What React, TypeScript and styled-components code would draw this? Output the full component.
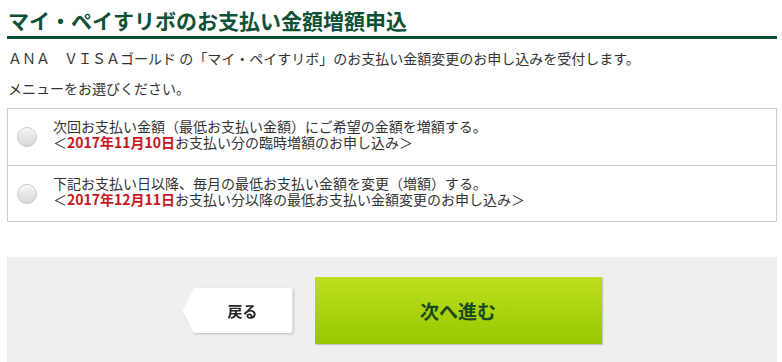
import React from 'react';
import styled, { createGlobalStyle } from 'styled-components';

const GlobalStyle = createGlobalStyle`
  html, body {
    margin: 0;
    padding: 0;
    background: #ffffff;
  }
  body {
    font-family: "Noto Sans CJK JP", "Noto Sans", sans-serif;
    color: #333333;
  }
`;

const Page = styled.div`
  width: 770px;
  margin-left: 7px;
  padding-top: 6px;
`;

const Title = styled.h1`
  margin: 0;
  padding: 0 0 2px 1px;
  font-size: 21px;
  line-height: 28px;
  font-weight: bold;
  color: #0e5134;
  border-bottom: 3px solid #0b4f32;
`;

const Lead = styled.p`
  margin: 9px 0 0 1px;
  font-size: 14px;
  line-height: 20px;
  color: #333;

  & + & {
    margin-top: 10px;
  }
`;

const OptionBox = styled.div`
  margin-top: 10px;
  border: 1px solid #cccccc;
`;

const OptionRow = styled.label`
  display: flex;
  align-items: flex-start;
  height: 56px;
  box-sizing: border-box;
  padding: 9px 0 0 9px;
  cursor: pointer;

  & + & {
    border-top: 1px solid #cccccc;
  }
`;

const Radio = styled.span`
  flex: none;
  width: 20px;
  height: 20px;
  margin-top: 9px;
  border-radius: 50%;
  box-sizing: border-box;
  border: 1px solid #c8c8c8;
  background: linear-gradient(#f4f4f4, #d8d8d8);
  box-shadow: inset 0 1px 1px rgba(255, 255, 255, 0.8);
`;

const OptionText = styled.span`
  margin-left: 16px;
  font-size: 14px;
  line-height: 16px;
  color: #333;
  display: flex;
  flex-direction: column;
`;

const DateMark = styled.b`
  color: #c8161d;
  font-weight: bold;
`;

const ActionArea = styled.div`
  margin-top: 35px;
  background: #efefef;
  padding: 20px 0;
  display: flex;
  justify-content: center;
  align-items: center;
  gap: 22px;
`;

const BackShadow = styled.div`
  filter: drop-shadow(1px 1px 1px rgba(0, 0, 0, 0.22));
`;

const BackButton = styled.button`
  display: block;
  width: 110px;
  height: 45px;
  border: none;
  padding: 0 0 0 10px;
  background: #ffffff;
  clip-path: polygon(11px 0, 100% 0, 100% 100%, 11px 100%, 0 50%);
  border-radius: 0 3px 3px 0;
  font-family: "Noto Sans CJK JP", sans-serif;
  font-size: 15px;
  font-weight: bold;
  color: #222;
  cursor: pointer;
`;

const NextButton = styled.button`
  width: 287px;
  height: 67px;
  border: none;
  padding: 0;
  background: linear-gradient(#bde01e, #98c800);
  box-shadow: 1px 1px 1px rgba(0, 0, 0, 0.18);
  font-family: "Noto Sans CJK JP", sans-serif;
  font-size: 19px;
  font-weight: bold;
  color: #1a4a1c;
  cursor: pointer;
`;

const options = [
  {
    main: '次回お支払い金額（最低お支払い金額）にご希望の金額を増額する。',
    date: '2017年11月10日',
    rest: 'お支払い分の臨時増額のお申し込み',
  },
  {
    main: '下記お支払い日以降、毎月の最低お支払い金額を変更（増額）する。',
    date: '2017年12月11日',
    rest: 'お支払い分以降の最低お支払い金額変更のお申し込み',
  },
];

const App = () => {
  return (
    <>
      <GlobalStyle />
      <Page>
        <Title>マイ・ペイすリボのお支払い金額増額申込</Title>
        <Lead>
          ＡＮＡ　ＶＩＳＡゴールド の「マイ・ペイすリボ」のお支払い金額変更のお申し込みを受付します。
        </Lead>
        <Lead>メニューをお選びください。</Lead>
        <OptionBox>
          {options.map((o) => (
            <OptionRow key={o.date}>
              <Radio />
              <OptionText>
                <span>{o.main}</span>
                <span>
                  ＜<DateMark>{o.date}</DateMark>
                  {o.rest}＞
                </span>
              </OptionText>
            </OptionRow>
          ))}
        </OptionBox>
        <ActionArea>
          <BackShadow>
            <BackButton>戻る</BackButton>
          </BackShadow>
          <NextButton>次へ進む</NextButton>
        </ActionArea>
      </Page>
    </>
  );
};

export default App;
